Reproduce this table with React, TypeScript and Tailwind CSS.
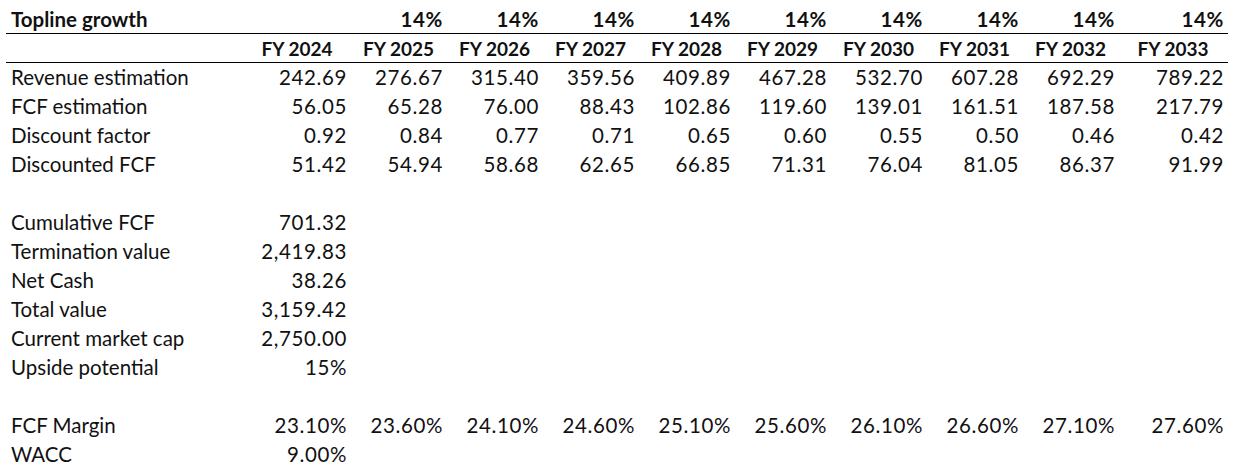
const years = ["FY 2024", "FY 2025", "FY 2026", "FY 2027", "FY 2028", "FY 2029", "FY 2030", "FY 2031", "FY 2032", "FY 2033"];

const projection: [string, string[]][] = [
  ["Revenue estimation", ["242.69", "276.67", "315.40", "359.56", "409.89", "467.28", "532.70", "607.28", "692.29", "789.22"]],
  ["FCF estimation", ["56.05", "65.28", "76.00", "88.43", "102.86", "119.60", "139.01", "161.51", "187.58", "217.79"]],
  ["Discount factor", ["0.92", "0.84", "0.77", "0.71", "0.65", "0.60", "0.55", "0.50", "0.46", "0.42"]],
  ["Discounted FCF", ["51.42", "54.94", "58.68", "62.65", "66.85", "71.31", "76.04", "81.05", "86.37", "91.99"]],
];

const summary: [string, string][] = [
  ["Cumulative FCF", "701.32"],
  ["Termination value", "2,419.83"],
  ["Net Cash", "38.26"],
  ["Total value", "3,159.42"],
  ["Current market cap", "2,750.00"],
  ["Upside potential", "15%"],
];

const margins = ["23.10%", "23.60%", "24.10%", "24.60%", "25.10%", "25.60%", "26.10%", "26.60%", "27.10%", "27.60%"];

const cols = "grid grid-cols-[238px_107px_repeat(8,96px)_109px]";

function Row({ label, cells, bold = false, center = false, className = "h-[29px]" }: { label: string; cells: string[]; bold?: boolean; center?: boolean; className?: string }) {
  return (
    <div className={`${cols} items-center ${className} ${bold ? "font-bold" : ""}`}>
      <div className="pl-[5px] whitespace-nowrap">{label}</div>
      {cells.map((c, i) => (
        <div
          key={i}
          className={`whitespace-nowrap ${center ? "text-center pl-[4px] pr-[5px] text-[19px]" : "text-right pr-[4px] tracking-[0.6px]"}`}
        >
          {c}
        </div>
      ))}
    </div>
  );
}

export default function App() {
  return (
    <div className="h-[471px] w-[1250px] bg-white pl-[6px] text-[20.5px] leading-none text-[#111] [font-family:Lato,'Noto_Sans',sans-serif]">
      <div className="w-[1222px]">
        <div className="border-b border-black">
          <Row label="Topline growth" cells={["", ...Array(9).fill("14%")]} bold className="h-[33px] pt-[5px]" />
        </div>
        <div className="border-b border-black">
          <Row label="" cells={years} bold center className="h-[28px]" />
        </div>
        {projection.map(([l, v]) => (
          <Row key={l} label={l} cells={v} />
        ))}
        <div className="h-[29px]" />
        {summary.map(([l, v]) => (
          <Row key={l} label={l} cells={[v]} />
        ))}
        <div className="h-[29px]" />
        <Row label="FCF Margin" cells={margins} />
        <Row label="WACC" cells={["9.00%"]} />
      </div>
    </div>
  );
}
